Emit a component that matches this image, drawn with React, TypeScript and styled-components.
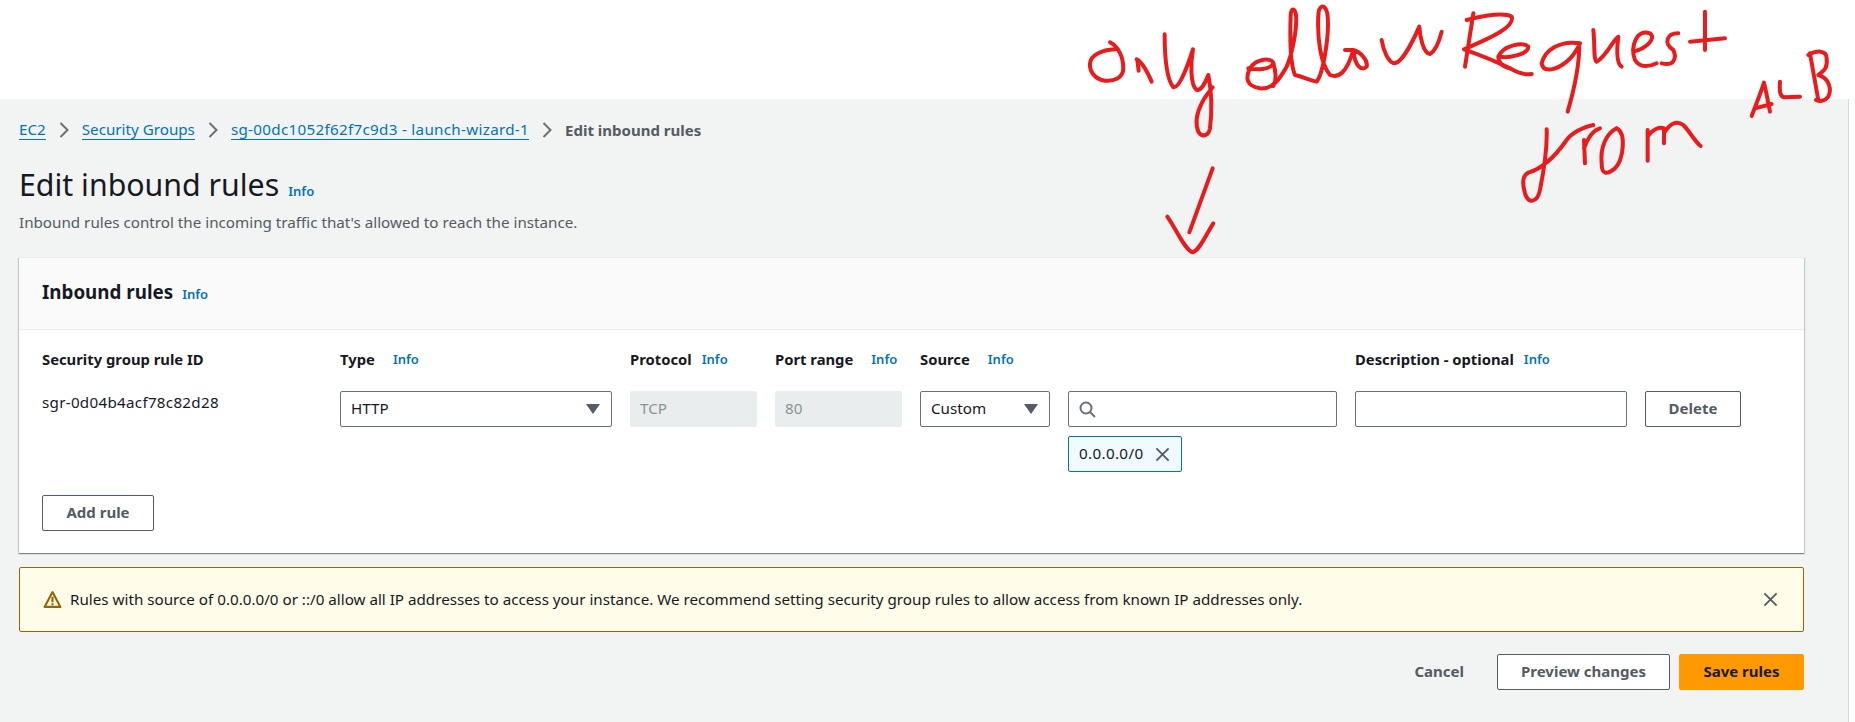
import React from "react";
import styled, { createGlobalStyle } from "styled-components";

const GlobalStyle = createGlobalStyle`
  html, body {
    margin: 0;
    background: #fff;
  }
  body {
    font-family: "Noto Sans", "Open Sans", sans-serif;
    font-size: 15.2px;
    color: #16191f;
  }
`;

const Page = styled.div`
  position: relative;
  width: 1855px;
  height: 722px;
  overflow: hidden;
  display: flex;
  flex-direction: column;
`;

const TopStrip = styled.div`
  height: 99px;
  flex: none;
`;

const Content = styled.main`
  flex: 1;
  width: 1849px;
  box-sizing: border-box;
  background: #f2f3f3;
  border-right: 1px solid #d5dbdb;
  padding: 21px 44px 0 19px;
`;

const Crumbs = styled.nav`
  display: flex;
  align-items: center;
  height: 20px;
`;

const CrumbLink = styled.a<{ $tracking?: number }>`
  color: #0073bb;
  text-decoration: none;
  border-bottom: 1px solid #0073bb;
  line-height: 19px;
  letter-spacing: ${(p) => p.$tracking ?? 0}px;
`;

const CrumbCurrent = styled.span`
  color: #545b64;
  font-weight: 700;
  font-size: 15px;
`;

const Chevron = styled.svg`
  width: 10px;
  height: 16px;
  margin: 0 13px;
  flex: none;
`;

const TitleRow = styled.div`
  display: flex;
  align-items: baseline;
  gap: 9px;
  margin-top: 25px;
`;

const Title = styled.h1`
  margin: 0;
  font-size: 30.3px;
  line-height: 40px;
  font-weight: 400;
`;

const Info = styled.a`
  color: #0073bb;
  font-size: 13px;
  font-weight: 600;
  line-height: 18px;
`;

const Subtitle = styled.p`
  margin: 7px 0 0;
  color: #545b64;
  line-height: 20px;
`;

const Card = styled.section`
  margin-top: 25px;
  background: #fff;
  border-top: 1px solid #eaeded;
  box-shadow: 0 1px 1px 0 rgba(0, 28, 36, 0.3), 1px 1px 1px 0 rgba(0, 28, 36, 0.15),
    -1px 1px 1px 0 rgba(0, 28, 36, 0.15);
`;

const CardHeader = styled.header`
  display: flex;
  align-items: baseline;
  gap: 9px;
  height: 72px;
  box-sizing: border-box;
  padding: 22px 23px 0;
  background: #fafafa;
  border-bottom: 1px solid #eaeded;
`;

const CardTitle = styled.h2`
  margin: 0;
  font-size: 18.8px;
  line-height: 24px;
  font-weight: 700;
`;

const CardBody = styled.div`
  padding: 20px 23px 22px;
`;

const RulesGrid = styled.div`
  display: grid;
  grid-template-columns: 280px 272px 127px 127px 130px 269px 272px 96px;
  column-gap: 18px;
  row-gap: 23px;
  align-items: start;
`;

const HeadCell = styled.div<{ $gap: number }>`
  display: flex;
  align-items: center;
  gap: ${(p) => p.$gap}px;
  height: 18px;
  font-size: 14.8px;
  font-weight: 700;
  white-space: nowrap;
`;

const RuleId = styled.div`
  padding-top: 1px;
  line-height: 20px;
  letter-spacing: 0.28px;
`;

const Select = styled.div`
  display: flex;
  align-items: center;
  justify-content: space-between;
  height: 36px;
  box-sizing: border-box;
  padding: 0 11px 2px 10px;
  background: #fff;
  border: 1px solid #687078;
  border-radius: 2px;
`;

const Caret = styled.span`
  width: 0;
  height: 0;
  margin-top: 2px;
  border-left: 7px solid transparent;
  border-right: 7px solid transparent;
  border-top: 10px solid #545b64;
`;

const ReadOnlyField = styled.div`
  display: flex;
  align-items: center;
  height: 36px;
  box-sizing: border-box;
  padding: 0 10px 2px;
  background: #eaeded;
  border-radius: 2px;
  color: #879596;
`;

const TextField = styled.div`
  display: flex;
  align-items: center;
  height: 36px;
  box-sizing: border-box;
  padding: 0 10px;
  background: #fff;
  border: 1px solid #687078;
  border-radius: 2px;
`;

const SourceCell = styled.div`
  display: flex;
  flex-direction: column;
  align-items: stretch;
  gap: 9px;
`;

const Chip = styled.div`
  display: flex;
  align-items: center;
  justify-content: space-between;
  width: 114px;
  height: 36px;
  box-sizing: border-box;
  padding: 0 11px 0 10px;
  background: #f1faff;
  border: 1px solid #0073bb;
  border-radius: 2px;
`;

const ChipLabel = styled.span`
  margin-top: -3px;
  letter-spacing: 0.35px;
`;

const Button = styled.button<{ $primary?: boolean; $width: number }>`
  width: ${(p) => p.$width}px;
  height: 36px;
  padding: 0 0 2px;
  font-family: inherit;
  font-size: 15px;
  font-weight: 700;
  color: ${(p) => (p.$primary ? "#16191f" : "#545b64")};
  background: ${(p) => (p.$primary ? "#ff9900" : "#fff")};
  border: 1px solid ${(p) => (p.$primary ? "#ff9900" : "#545b64")};
  border-radius: 2px;
`;

const AddRow = styled.div`
  margin-top: 23px;
`;

const Alert = styled.div`
  display: flex;
  align-items: center;
  gap: 8px;
  height: 65px;
  box-sizing: border-box;
  margin-top: 14px;
  padding: 0 25px 0 23px;
  background: #fffce9;
  border: 1px solid #906806;
  border-radius: 2px;
`;

const AlertText = styled.span`
  flex: 1;
  margin-top: -2px;
`;

const Actions = styled.div`
  display: flex;
  justify-content: flex-end;
  align-items: center;
  gap: 9px;
  margin-top: 22px;
`;

const CancelLink = styled.span`
  margin-right: 24px;
  padding-bottom: 2px;
  color: #545b64;
  font-size: 15px;
  font-weight: 700;
`;

const Scribble = styled.svg`
  position: absolute;
  left: 0;
  top: 0;
  width: 1855px;
  height: 722px;
  pointer-events: none;
`;

const Crumb = () => (
  <Chevron viewBox="0 0 10 16">
    <path d="M1.5 1l7 7-7 7" fill="none" stroke="#687078" strokeWidth="2" />
  </Chevron>
);

const CloseIcon = ({ size }: { size: number }) => (
  <svg width={size} height={size} viewBox="0 0 16 16">
    <path d="M1.5 1.5l13 13M14.5 1.5l-13 13" stroke="#545b64" strokeWidth="2" fill="none" />
  </svg>
);

const SearchIcon = () => (
  <svg width="17" height="17" viewBox="0 0 17 17">
    <circle cx="7" cy="7" r="5.5" fill="none" stroke="#687078" strokeWidth="2" />
    <path d="M11 11l5 5" stroke="#687078" strokeWidth="2" fill="none" />
  </svg>
);

const WarningIcon = () => (
  <svg width="19" height="19" viewBox="0 0 18 18" style={{ flex: "none" }}>
    <path d="M9 2L1.5 16h15z" fill="none" stroke="#906806" strokeWidth="2" strokeLinejoin="round" />
    <path d="M9 6.5v5M9 12.5v2" stroke="#906806" strokeWidth="2" fill="none" />
  </svg>
);

// hand written note on top of the screenshot, traced in 3x crop coordinates
const Annotation = () => (
  <Scribble viewBox="0 0 1855 722">
    <g fill="none" stroke="#e81c1c" strokeWidth="12" strokeLinecap="round" strokeLinejoin="round">
      <g transform="translate(1060 0) scale(0.3333)">
        <path d="M150 127C175 140 190 170 190 205C190 235 160 245 135 242C105 238 88 215 90 190C92 165 125 150 165 148" />
        <path d="M232 180L236 212M230 178C245 185 262 215 275 245" />
        <path d="M314 103C314 160 318 235 340 262C360 265 385 190 399 148C392 185 390 255 410 270C425 272 435 250 445 225C452 260 458 320 450 385C445 410 425 412 415 395C405 370 410 340 425 310C435 290 448 275 458 262" />
        <path d="M565 205C590 210 630 210 640 190C635 172 590 175 570 205C555 235 560 258 600 265C640 268 660 235 680 200C698 160 712 80 708 45C705 22 692 22 692 50C690 110 690 190 705 225C730 230 745 240 770 245C790 220 810 100 802 40C795 8 775 15 775 50C772 110 780 190 810 225C835 235 860 220 880 150C900 155 925 180 920 200C905 215 885 200 880 150L855 150" />
        <path d="M640 190C648 215 650 240 640 258" />
        <path d="M965 120C970 150 985 190 1005 190C1030 185 1065 110 1078 80C1080 110 1090 160 1110 162C1130 150 1140 115 1145 95" />
        <path d="M458 505L388 697M322 650C350 690 375 750 398 757C420 750 440 700 460 670" />
      </g>
      <g transform="translate(1460 0) scale(0.3333)">
        <path d="M40 40L15 200M20 60C60 50 130 35 155 50C165 80 100 110 12 148C60 165 110 185 150 205C175 220 200 225 215 222" />
        <path d="M120 170C140 175 205 165 205 140C190 125 130 135 115 170C115 190 130 200 150 205" />
        <path d="M360 130C300 120 255 150 245 190C250 220 290 210 320 185C340 170 350 150 358 135C358 190 345 260 323 335" />
        <path d="M400 90C405 130 400 180 410 185C440 170 465 110 475 110C470 150 470 190 485 200" />
        <path d="M520 155C560 145 590 115 570 100C530 85 510 140 525 180C540 205 570 200 590 190" />
        <path d="M655 100C620 100 610 130 640 150C650 170 645 200 605 190" />
        <path d="M690 125L795 115M735 35L735 150" />
        <path d="M875 348C890 310 905 270 912 248C920 280 925 310 930 335M885 325L935 312" />
        <path d="M960 245C958 275 960 292 975 292L1020 290" />
        <path d="M1050 160L1075 300M1045 165C1070 150 1100 150 1100 175C1105 210 1085 215 1075 225C1110 235 1115 270 1105 290C1095 305 1075 305 1068 300" />
        <path d="M260 388C262 440 250 520 240 570C232 610 205 612 195 580C185 545 190 525 205 518C250 505 285 470 320 420C335 400 370 380 400 375" />
        <path d="M372 420L375 490M372 445C385 410 400 390 420 385" />
        <path d="M470 385C500 400 490 480 465 505C440 525 425 525 425 490C420 440 440 400 470 385" />
        <path d="M563 390L563 482M563 410C580 385 600 380 612 385L612 430M612 400C630 370 650 360 670 375C690 395 705 425 722 438" />
      </g>
    </g>
  </Scribble>
);

export default function App() {
  return (
    <Page>
      <GlobalStyle />
      <TopStrip />
      <Content>
        <Crumbs>
          <CrumbLink>EC2</CrumbLink>
          <Crumb />
          <CrumbLink>Security Groups</CrumbLink>
          <Crumb />
          <CrumbLink $tracking={0.3}>sg-00dc1052f62f7c9d3 - launch-wizard-1</CrumbLink>
          <Crumb />
          <CrumbCurrent>Edit inbound rules</CrumbCurrent>
        </Crumbs>
        <TitleRow>
          <Title>Edit inbound rules</Title>
          <Info>Info</Info>
        </TitleRow>
        <Subtitle>Inbound rules control the incoming traffic that's allowed to reach the instance.</Subtitle>
        <Card>
          <CardHeader>
            <CardTitle>Inbound rules</CardTitle>
            <Info>Info</Info>
          </CardHeader>
          <CardBody>
            <RulesGrid>
              <HeadCell $gap={0}>Security group rule ID</HeadCell>
              <HeadCell $gap={18}>
                Type <Info>Info</Info>
              </HeadCell>
              <HeadCell $gap={10}>
                Protocol <Info>Info</Info>
              </HeadCell>
              <HeadCell $gap={18}>
                Port range <Info>Info</Info>
              </HeadCell>
              <HeadCell $gap={18}>
                Source <Info>Info</Info>
              </HeadCell>
              <span />
              <HeadCell $gap={10}>
                Description - optional <Info>Info</Info>
              </HeadCell>
              <span />

              <RuleId>sgr-0d04b4acf78c82d28</RuleId>
              <Select>
                HTTP
                <Caret />
              </Select>
              <ReadOnlyField>TCP</ReadOnlyField>
              <ReadOnlyField>80</ReadOnlyField>
              <Select>
                Custom
                <Caret />
              </Select>
              <SourceCell>
                <TextField>
                  <SearchIcon />
                </TextField>
                <Chip>
                  <ChipLabel>0.0.0.0/0</ChipLabel>
                  <CloseIcon size={15} />
                </Chip>
              </SourceCell>
              <TextField />
              <Button $width={96}>Delete</Button>
            </RulesGrid>
            <AddRow>
              <Button $width={112}>Add rule</Button>
            </AddRow>
          </CardBody>
        </Card>
        <Alert>
          <WarningIcon />
          <AlertText>
            Rules with source of 0.0.0.0/0 or ::/0 allow all IP addresses to access your instance. We recommend setting
            security group rules to allow access from known IP addresses only.
          </AlertText>
          <CloseIcon size={15} />
        </Alert>
        <Actions>
          <CancelLink>Cancel</CancelLink>
          <Button $width={173}>Preview changes</Button>
          <Button $primary $width={125}>
            Save rules
          </Button>
        </Actions>
      </Content>
      <Annotation />
    </Page>
  );
}
